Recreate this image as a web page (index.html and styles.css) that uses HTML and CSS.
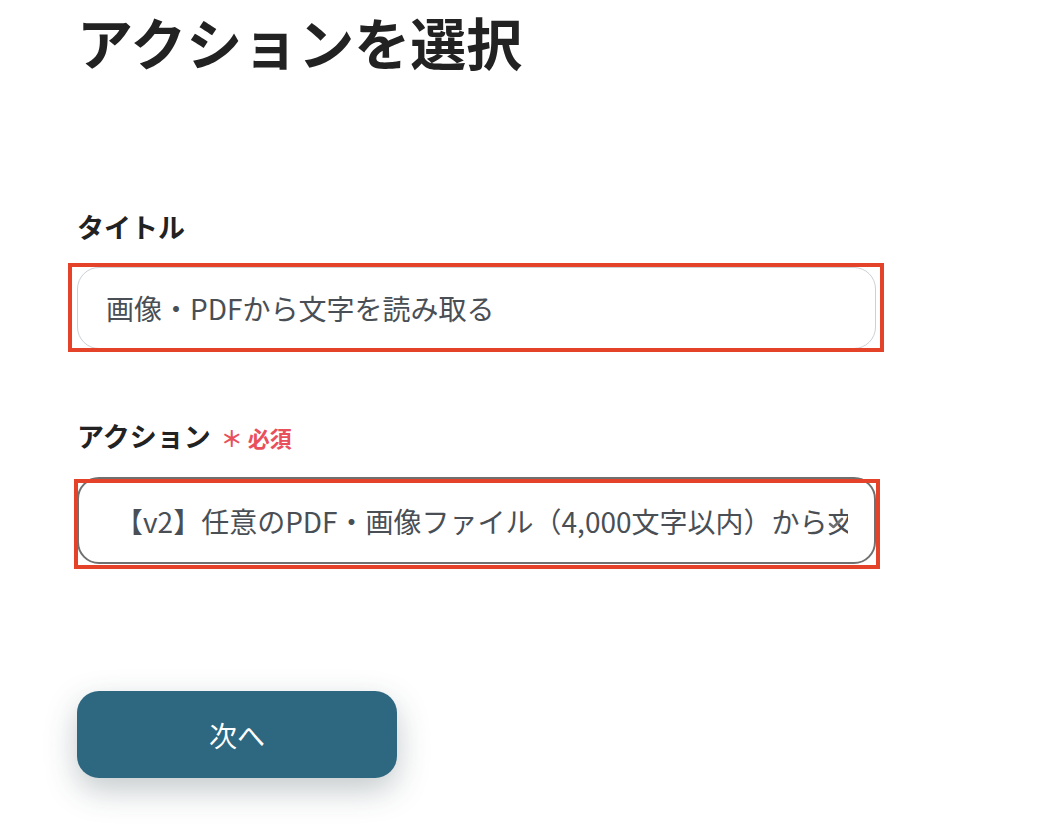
FILE: index.html
```html
<!DOCTYPE html>
<html lang="ja">
<head>
<meta charset="utf-8">
<link rel="stylesheet" href="styles.css">
</head>
<body>
<main class="page">
  <h1 class="heading">アクションを選択</h1>
  <section class="field field-title">
    <label class="label">タイトル</label>
    <div class="control">
      <div class="input">画像・PDFから文字を読み取る</div>
      <div class="mark mark-title"></div>
    </div>
  </section>
  <section class="field field-action">
    <label class="label">アクション<span class="req">＊ 必須</span></label>
    <div class="control">
      <div class="select"><span class="select-text">【v2】任意のPDF・画像ファイル（4,000文字以内）から文字を読み取る</span>
        <svg class="check" viewBox="0 0 16 12" width="16" height="12"><path d="M2 7 L5.5 10 L14 2" fill="none" stroke="#707070" stroke-width="2.6" stroke-linecap="round" stroke-linejoin="round"/></svg>
      </div>
      <div class="mark mark-action"></div>
    </div>
  </section>
  <button class="next">次へ</button>
</main>
</body>
</html>
```

FILE: styles.css
```css
* { box-sizing: border-box; }
html, body { margin: 0; padding: 0; background: #ffffff; }
body {
  font-family: "Noto Sans CJK JP", "Noto Sans", sans-serif;
  color: #222222;
  width: 1064px;
  height: 840px;
  overflow: hidden;
}
.page {
  padding: 0 0 0 77px;
  display: flex;
  flex-direction: column;
  align-items: flex-start;
}
.heading {
  margin: 3px 0 0 0;
  font-size: 56px;
  line-height: 76px;
  font-weight: 700;
  color: #222222;
  letter-spacing: 0;
}
.field { display: flex; flex-direction: column; width: 799px; }
.field-title { margin-top: 130px; }
.field-action { margin-top: 69px; }
.label {
  font-size: 27px;
  font-weight: 700;
  line-height: 36px;
  color: #222222;
  display: flex;
  align-items: baseline;
}
.req {
  color: #e8505b;
  font-size: 22px;
  margin-left: 10px;
}
.control { position: relative; margin-top: 22px; }
.input {
  height: 82px;
  border: 1.5px solid #ccd1d6;
  border-radius: 22px;
  padding: 0 0 0 28px;
  display: flex;
  align-items: center;
  font-size: 28px;
  color: #4a4f55;
  white-space: nowrap;
}
.field-action .control { margin-top: 22px; }
.select {
  position: relative;
  height: 87px;
  border: 2px solid #707070;
  border-radius: 22px;
  padding: 0 0 0 36px;
  display: flex;
  align-items: center;
  font-size: 28px;
  color: #4a4f55;
  white-space: nowrap;
  overflow: hidden;
}
.select-text { overflow: hidden; width: 733px; display: block; flex: none; }
.check { position: absolute; left: 749px; top: 38px; z-index: 2; }
.mark {
  position: absolute;
  border: 4.5px solid #e5422a;
  pointer-events: none;
}
.mark-title { left: -9px; top: -4px; right: -8px; bottom: -3px; }
.mark-action { left: -3px; top: 2px; right: -4px; bottom: -5px; }
.next {
  margin-top: 127px;
  width: 320px;
  height: 87px;
  border: none;
  border-radius: 22px;
  background: #2e6780;
  color: #ffffff;
  font-family: "Noto Sans CJK JP", sans-serif;
  font-size: 28px;
  box-shadow: 0 12px 32px rgba(40, 60, 70, 0.28);
}
```
